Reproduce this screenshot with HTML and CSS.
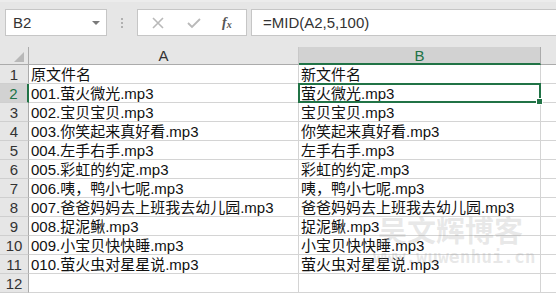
FILE: index.html
```html
<!DOCTYPE html>
<html lang="zh">
<head>
    <meta charset="UTF-8">
    <title>Excel - MID</title>
    <link rel="stylesheet" href="styles.css">
</head>
<body>
    <div class="toolbar">
        <div class="name-box">
            <span>B2</span>
            <span class="arrow"></span>
        </div>
        <div class="dots"><i></i><i></i><i></i></div>
        <div class="fx-buttons">
            <svg width="12" height="12" viewBox="0 0 12 12"><path d="M1 1 L11 11 M11 1 L1 11" stroke="#b9b9b9" stroke-width="1.6" fill="none"/></svg>
            <svg width="14" height="12" viewBox="0 0 14 12"><path d="M1 6 L5 10 L13 2" stroke="#b9b9b9" stroke-width="1.8" fill="none"/></svg>
            <span class="fx">f<sub>x</sub></span>
        </div>
        <div class="formula">=MID(A2,5,100)</div>
    </div>

    <div class="sheet">
        <!-- Kopfzeile -->
        <div class="corner"><span class="tri"></span></div>
        <div class="col-head">A</div>
        <div class="col-head selected">B</div>
        <div class="col-head rest"></div>

        <div class="row-head">1</div><div class="cell">原文件名</div><div class="cell">新文件名</div><div class="cell rest"></div>
        <div class="row-head selected">2</div><div class="cell">001.萤火微光.mp3</div><div class="cell active">萤火微光.mp3<span class="handle"></span></div><div class="cell rest"></div>
        <div class="row-head">3</div><div class="cell">002.宝贝宝贝.mp3</div><div class="cell">宝贝宝贝.mp3</div><div class="cell rest"></div>
        <div class="row-head">4</div><div class="cell">003.你笑起来真好看.mp3</div><div class="cell">你笑起来真好看.mp3</div><div class="cell rest"></div>
        <div class="row-head">5</div><div class="cell">004.左手右手.mp3</div><div class="cell">左手右手.mp3</div><div class="cell rest"></div>
        <div class="row-head">6</div><div class="cell">005.彩虹的约定.mp3</div><div class="cell">彩虹的约定.mp3</div><div class="cell rest"></div>
        <div class="row-head">7</div><div class="cell">006.咦，鸭小七呢.mp3</div><div class="cell">咦，鸭小七呢.mp3</div><div class="cell rest"></div>
        <div class="row-head">8</div><div class="cell">007.爸爸妈妈去上班我去幼儿园.mp3</div><div class="cell">爸爸妈妈去上班我去幼儿园.mp3</div><div class="cell rest"></div>
        <div class="row-head">9</div><div class="cell">008.捉泥鳅.mp3</div><div class="cell">捉泥鳅.mp3</div><div class="cell rest"></div>
        <div class="row-head">10</div><div class="cell">009.小宝贝快快睡.mp3</div><div class="cell">小宝贝快快睡.mp3</div><div class="cell rest"></div>
        <div class="row-head">11</div><div class="cell">010.萤火虫对星星说.mp3</div><div class="cell">萤火虫对星星说.mp3</div><div class="cell rest"></div>
        <div class="row-head">12</div><div class="cell"></div><div class="cell"></div><div class="cell rest"></div>

        <div class="watermark">
            <div class="wm-big">吴文辉博客</div>
            <div class="wm-small">www.wuwenhui.cn</div>
        </div>
    </div>
</body>
</html>
```

FILE: styles.css
```css
body {
    margin: 0;
    width: 556px;
    height: 294px;
    overflow: hidden;
    font-family: "Liberation Sans", "Noto Sans CJK SC", sans-serif;
    background: #ffffff;
    color: #222;
}

.toolbar {
    height: 47px;
    box-sizing: border-box;
    background: #e6e6e6;
    border-top: 2px solid #ececec;
    display: flex;
    align-items: flex-start;
    padding-top: 7px;
}

.name-box {
    width: 102px;
    height: 27px;
    box-sizing: border-box;
    margin-left: 5px;
    background: #fff;
    border: 1px solid #c6c6c6;
    display: flex;
    align-items: center;
    justify-content: space-between;
    padding: 0 6px 0 7px;
    font-size: 15px;
    color: #333;
}

.arrow {
    width: 0;
    height: 0;
    border-left: 4px solid transparent;
    border-right: 4px solid transparent;
    border-top: 4px solid #7a7a7a;
}

.dots {
    width: 30px;
    height: 27px;
    display: flex;
    flex-direction: column;
    align-items: center;
    justify-content: center;
    gap: 2px;
}

.dots i {
    width: 2px;
    height: 2px;
    background: #b0b0b0;
}

.fx-buttons {
    width: 110px;
    height: 27px;
    box-sizing: border-box;
    background: #fff;
    border: 1px solid #c6c6c6;
    display: flex;
    align-items: center;
    padding-left: 14px;
    gap: 23px;
}

.fx {
    font-family: "Liberation Serif", serif;
    font-style: italic;
    font-weight: bold;
    font-size: 14px;
    color: #555;
    margin-left: -2px;
}

.fx sub {
    font-size: 10px;
    vertical-align: -1px;
}

.formula {
    flex: 1;
    height: 27px;
    box-sizing: border-box;
    margin-left: 4px;
    background: #fff;
    border: 1px solid #c6c6c6;
    border-right: none;
    padding-left: 11px;
    font-size: 15px;
    line-height: 25px;
    color: #333;
}

.sheet {
    position: relative;
    display: grid;
    grid-template-columns: 29px 270px 242px 1fr;
    grid-template-rows: 18px repeat(12, 19px);
    overflow: hidden;
}

.corner,
.col-head {
    background: #e6e6e6;
    border-bottom: 1px solid #ababab;
    border-right: 1px solid #c8c8c8;
    box-sizing: border-box;
}

.corner {
    position: relative;
    border-right-color: #ababab;
}

.tri {
    position: absolute;
    right: 4px;
    bottom: 2px;
    width: 0;
    height: 0;
    border-left: 10px solid transparent;
    border-bottom: 10px solid #b8b8b8;
}

.col-head {
    text-align: center;
    font-size: 15px;
    line-height: 18px;
    color: #333;
}

.col-head.selected {
    background: #d2d2d2;
    border-bottom: 2px solid #217346;
    border-right-color: #ababab;
    color: #217346;
}

.col-head.rest {
    border-right: none;
}

.row-head {
    background: #e6e6e6;
    border-right: 1px solid #ababab;
    border-bottom: 1px solid #cfcfcf;
    box-sizing: border-box;
    text-align: center;
    font-size: 15px;
    line-height: 19px;
    color: #333;
}

.row-head.selected {
    background: #d2d2d2;
    border-right: 2px solid #217346;
    color: #217346;
}

.cell {
    border-right: 1px solid #d4d4d4;
    border-bottom: 1px solid #d4d4d4;
    box-sizing: border-box;
    padding-left: 2px;
    font-size: 15px;
    line-height: 19px;
    white-space: nowrap;
    color: #111;
}

.cell.rest {
    border-right: none;
}

.cell.active {
    position: relative;
    overflow: visible;
}

.cell.active::after {
    content: "";
    position: absolute;
    left: -1px;
    top: -1px;
    right: -1px;
    bottom: -1px;
    border: 2px solid #217346;
}

.handle {
    position: absolute;
    right: -3px;
    bottom: -3px;
    width: 5px;
    height: 5px;
    background: #217346;
    border: 1px solid #fff;
    z-index: 2;
}

.watermark {
    position: absolute;
    left: 378px;
    top: 170px;
    width: 175px;
    color: rgba(150, 150, 150, 0.22);
    pointer-events: none;
    white-space: nowrap;
}

.wm-big {
    font-size: 29px;
    font-weight: bold;
    letter-spacing: 0;
    line-height: 30px;
}

.wm-small {
    font-family: "DejaVu Sans Mono", monospace;
    font-size: 18px;
    font-weight: bold;
    line-height: 20px;
    margin-left: -5px;
}
```
